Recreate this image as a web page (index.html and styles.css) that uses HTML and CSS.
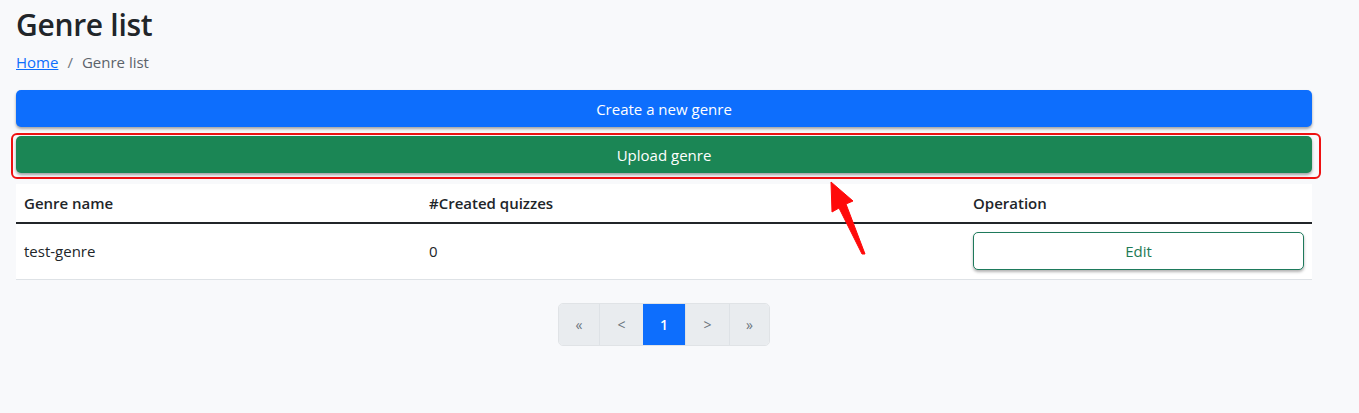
FILE: index.html
```html
<!DOCTYPE html>
<html lang="en">
<head>
<meta charset="utf-8">
<title>Genre list</title>
<link rel="stylesheet" href="styles.css">
</head>
<body>
<main class="container">
  <h1 class="title">Genre list</h1>
  <nav class="breadcrumb">
    <a href="#" class="crumb-link">Home</a>
    <span class="crumb-sep">/</span>
    <span class="crumb-current">Genre list</span>
  </nav>
  <div class="actions">
    <button class="btn btn-primary">Create a new genre</button>
    <div class="highlight">
      <button class="btn btn-success">Upload genre</button>
    </div>
  </div>
  <table class="table">
    <thead>
      <tr>
        <th class="col-name">Genre name</th>
        <th class="col-count">#Created quizzes</th>
        <th class="col-op">Operation</th>
      </tr>
    </thead>
    <tbody>
      <tr>
        <td>test-genre</td>
        <td>0</td>
        <td><button class="btn btn-outline">Edit</button></td>
      </tr>
    </tbody>
  </table>
  <div class="pager-wrap">
    <ul class="pagination">
      <li class="page-item disabled">«</li>
      <li class="page-item disabled">&lt;</li>
      <li class="page-item active">1</li>
      <li class="page-item disabled">&gt;</li>
      <li class="page-item disabled">»</li>
    </ul>
  </div>
  <svg class="arrow" width="50" height="90" viewBox="0 0 50 90">
    <path d="M2 3 L24 22 L17 25 L36 75 L33 75 L10 29 L3 33 Z" fill="#ff0a0a" stroke="#ff0a0a" stroke-width="1" stroke-linejoin="round"/>
  </svg>
</main>
</body>
</html>
```

FILE: styles.css
```css
* { box-sizing: border-box; }
html, body { margin: 0; padding: 0; }
body {
  background: #f8f9fb;
  font-family: "Open Sans", "Noto Sans", "Liberation Sans", sans-serif;
  color: #212529;
  font-size: 15px;
  width: 1359px;
  height: 413px;
  overflow: hidden;
}
.container {
  position: relative;
  padding: 0 47px 0 16px;
}
.title {
  margin: 0;
  padding-top: 3px;
  font-size: 30px;
  font-weight: 600;
  line-height: 44px;
  letter-spacing: -0.3px;
}
.breadcrumb {
  display: flex;
  gap: 9px;
  margin-top: 4px;
  font-size: 15px;
  line-height: 22px;
  color: #5c636a;
}
.crumb-link { color: #0d6efd; text-decoration: underline; }
.crumb-sep { color: #6c757d; }
.actions {
  margin-top: 17px;
  display: flex;
  flex-direction: column;
  gap: 6px;
}
.btn {
  display: block;
  width: 100%;
  height: 37px;
  border-radius: 5px;
  border: 1px solid transparent;
  font-family: inherit;
  font-size: 15px;
  color: #fff;
  cursor: pointer;
  box-shadow: 0 2px 3px rgba(0,0,0,0.35);
}
.btn-primary { background: #0d6efd; }
.btn-success { background: #1b8655; }
.highlight {
  margin: 0 -9px 0 -5px;
  padding: 1px 7px 4px 3px;
  border: 2px solid #ee1111;
  border-radius: 6px;
}
.table {
  width: 1296px;
  margin-top: 5px;
  border-collapse: collapse;
  background: #fff;
  font-size: 15px;
}
.table th {
  text-align: left;
  font-weight: 600;
  padding: 0 8px;
  height: 39px;
  border-bottom: 2px solid #212529;
}
.table td {
  padding: 0 8px;
  height: 56px;
  border-bottom: 1px solid #dee2e6;
}
.col-name { width: 405px; }
.col-count { width: 544px; }
.btn-outline {
  background: #fff;
  color: #1e7a55;
  border: 1px solid #1e7a5c;
  height: 38px;
  box-shadow: 0 2px 3px rgba(0,0,0,0.3);
}
.pager-wrap {
  display: flex;
  justify-content: center;
  margin-top: 23px;
}
.pagination {
  display: flex;
  list-style: none;
  margin: 0;
  padding: 0;
  border-radius: 5px;
  overflow: hidden;
  border: 1px solid #e0e3e6;
}
.page-item {
  height: 41px;
  width: 42px;
  display: flex;
  align-items: center;
  justify-content: center;
  background: #e9ecef;
  color: #6c757d;
  font-size: 14px;
  border-left: 1px solid #dee2e6;
}
.page-item:first-child { border-left: none; width: 40px; }
.page-item:nth-child(2) { width: 44px; }
.page-item:nth-child(4) { width: 44px; }
.page-item:last-child { width: 40px; }
.page-item.active { background: #0d6efd; color: #fff; border-left: none; font-weight: 600; }
.arrow {
  position: absolute;
  left: 829px;
  top: 179px;
}
```
